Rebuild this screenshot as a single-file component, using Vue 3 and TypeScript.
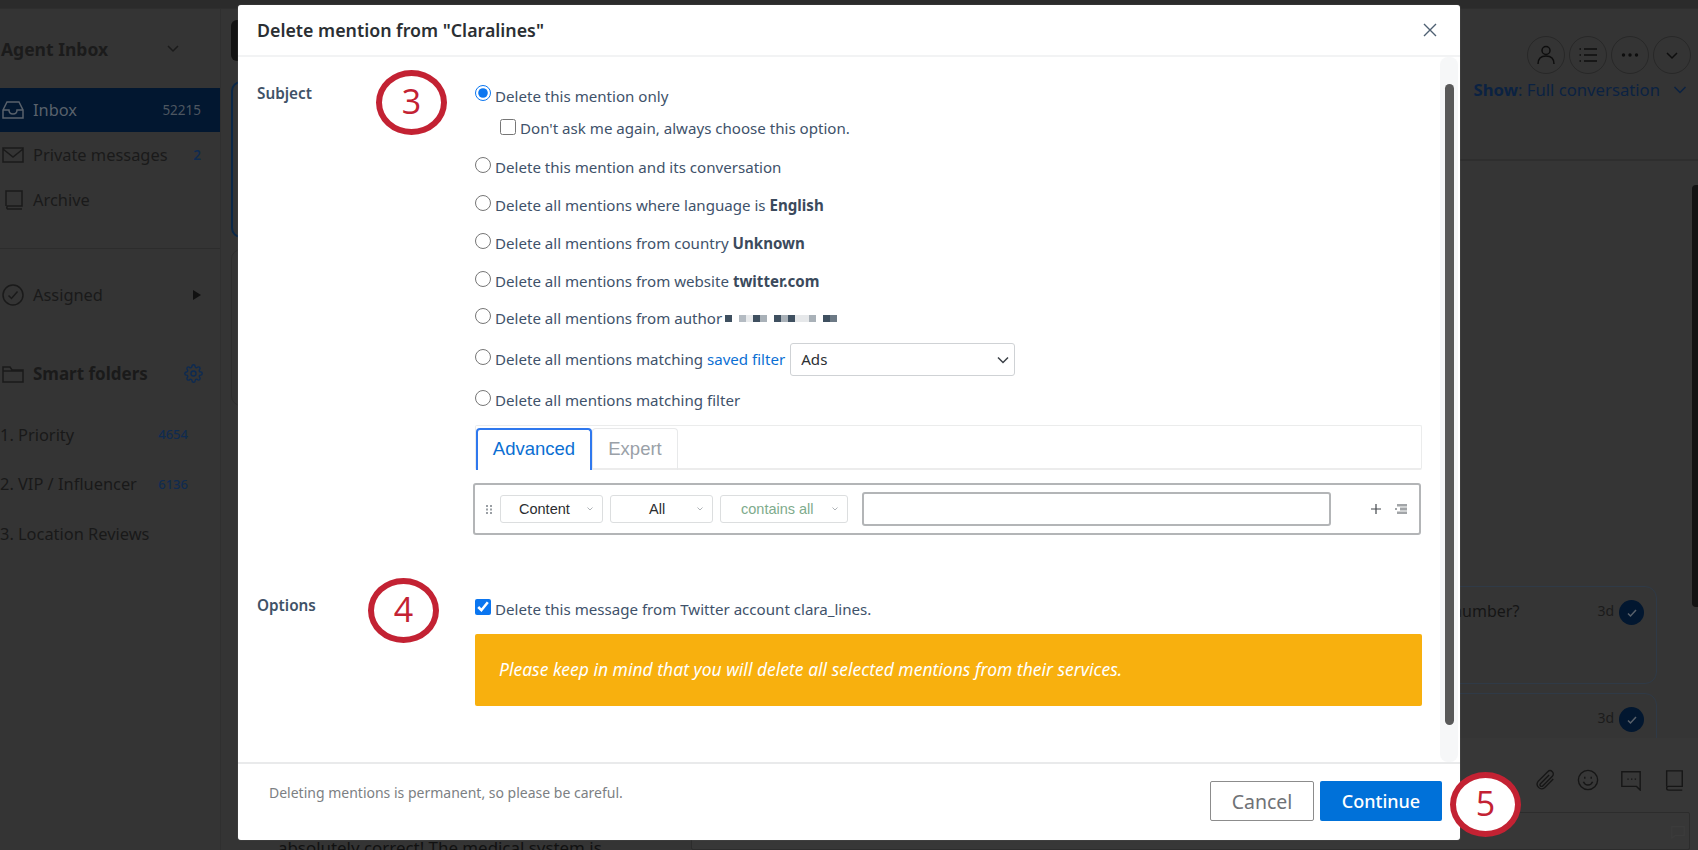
<script setup lang="ts">
interface Opt { text: string; bold?: string }
const simpleOpts: Opt[] = [
  { text: 'Delete this mention and its conversation' },
  { text: 'Delete all mentions where language is ', bold: 'English' },
  { text: 'Delete all mentions from country ', bold: 'Unknown' },
  { text: 'Delete all mentions from website ', bold: 'twitter.com' },
]
const pixels: string[] = ['#3f5060','#fff','#b4bbc2','#e8eaec','#3f5060','#a9b1b8','#fff','#3f5060','#a9b1b8','#3f5060','#e6e8ea','#e6e8ea','#a9b1b8','#fff','#3f5060','#6c7985']
const folders = [
  { name: '1. Priority', count: '4654' },
  { name: '2. VIP / Influencer', count: '6136' },
  { name: '3. Location Reviews', count: '' },
]
</script>

<template>
  <div class="page">
    <div class="topbar"></div>
    <div class="app">
      <aside class="sidebar">
        <div class="side-title">
          <span>Agent Inbox</span>
          <svg width="14" height="10" viewBox="0 0 14 10" class="side-chev"><path d="M2 2l5 5 5-5" /></svg>
        </div>
        <div class="nav nav-active">
          <svg class="nav-ico" width="24" height="24" viewBox="0 0 24 24"><path d="M2 12l4-8h12l4 8v8H2zM2 12h6c0 3 2 4 4 4s4-1 4-4h6" /></svg>
          <span class="nav-label">Inbox</span><span class="nav-count">52215</span>
        </div>
        <div class="nav">
          <svg class="nav-ico" width="24" height="24" viewBox="0 0 24 24"><path d="M2 5h20v14H2zM2 6l10 8 10-8" /></svg>
          <span class="nav-label">Private messages</span><span class="nav-count blue">2</span>
        </div>
        <div class="nav">
          <svg class="nav-ico" width="24" height="24" viewBox="0 0 24 24"><path d="M5 18V3h16v15H6.500a2 2 0 0 0 0 3H21" /></svg>
          <span class="nav-label archive">Archive</span>
        </div>
        <div class="side-rule"></div>
        <div class="nav assigned">
          <svg class="nav-ico" width="24" height="24" viewBox="0 0 24 24"><circle cx="12" cy="12" r="10" /><path d="M7.500 12.500l3 3 6-7" /></svg>
          <span class="nav-label archive">Assigned</span>
          <span class="tri"></span>
        </div>
        <div class="nav smart">
          <svg class="nav-ico" width="24" height="24" viewBox="0 0 24 24"><path d="M2 20V5h7l2 3h11v12zM2 9h20" /></svg>
          <span class="smart-label">Smart folders</span>
          <svg class="gear" width="19" height="19" viewBox="0 0 24 24"><circle cx="12" cy="12" r="3.200" /><path d="M19.400 15a1.650 1.650 0 0 0 .33 1.820l.06.06a2 2 0 0 1 0 2.830 2 2 0 0 1-2.830 0l-.06-.06a1.650 1.650 0 0 0-1.820-.33 1.650 1.650 0 0 0-1 1.510V21a2 2 0 0 1-2 2 2 2 0 0 1-2-2v-.09A1.650 1.650 0 0 0 9 19.400a1.650 1.650 0 0 0-1.820.33l-.06.06a2 2 0 0 1-2.830 0 2 2 0 0 1 0-2.830l.06-.06a1.650 1.650 0 0 0 .33-1.820 1.650 1.650 0 0 0-1.510-1H3a2 2 0 0 1-2-2 2 2 0 0 1 2-2h.09A1.650 1.650 0 0 0 4.600 9a1.650 1.650 0 0 0-.33-1.820l-.06-.06a2 2 0 0 1 0-2.830 2 2 0 0 1 2.830 0l.06.06a1.650 1.650 0 0 0 1.820.33H9a1.650 1.650 0 0 0 1-1.510V3a2 2 0 0 1 2-2 2 2 0 0 1 2 2v.09a1.650 1.650 0 0 0 1 1.510 1.650 1.650 0 0 0 1.820-.33l.06-.06a2 2 0 0 1 2.830 0 2 2 0 0 1 0 2.830l-.06.06a1.650 1.650 0 0 0-.33 1.820V9a1.650 1.650 0 0 0 1.510 1H21a2 2 0 0 1 2 2 2 2 0 0 1-2 2h-.09a1.650 1.650 0 0 0-1.510 1z" /></svg>
        </div>
        <div class="folder" v-for="f in folders" :key="f.name">
          <span class="folder-name">{{ f.name }}</span>
          <span class="folder-count">{{ f.count }}</span>
        </div>
      </aside>

      <section class="list">
        <div class="list-tab"></div>
        <div class="list-card selected"></div>
        <div class="list-card"></div>
        <p class="snippet">absolutely correct! The medical system is</p>
      </section>

      <section class="thread">
        <header class="thread-head">
          <div class="round-row">
            <span class="round"><svg width="22" height="22" viewBox="0 0 22 22"><circle cx="11" cy="6.500" r="4" /><path d="M3 20c0-5 3-8 8-8s8 3 8 8" /></svg></span>
            <span class="round"><svg width="20" height="20" viewBox="0 0 20 20"><path d="M6 4h13M6 10h13M6 16h13M1.500 4h1.500M1.500 10h1.500M1.500 16h1.500" /></svg></span>
            <span class="round"><svg width="20" height="20" viewBox="0 0 20 20"><circle cx="3.500" cy="10" r="1.700" class="fill" /><circle cx="10" cy="10" r="1.700" class="fill" /><circle cx="16.500" cy="10" r="1.700" class="fill" /></svg></span>
            <span class="round"><svg width="14" height="14" viewBox="0 0 14 14"><path d="M2 5l5 5 5-5" /></svg></span>
          </div>
          <div class="show">
            <span><b>Show</b>: Full conversation</span>
            <svg width="14" height="10" viewBox="0 0 14 10"><path d="M1.500 2l5.500 5.500L12.500 2" /></svg>
          </div>
        </header>
        <div class="messages">
          <div class="bubble first">
            <span class="bubble-text">Can you share your phone number?</span>
            <span class="age">3d</span>
            <span class="tick"><svg width="12" height="12" viewBox="0 0 12 12"><path d="M2 6.500l2.500 2.500L10 3" /></svg></span>
          </div>
          <div class="bubble second">
            <span class="bubble-text"></span>
            <span class="age">3d</span>
            <span class="tick"><svg width="12" height="12" viewBox="0 0 12 12"><path d="M2 6.500l2.500 2.500L10 3" /></svg></span>
          </div>
          <div class="thumb-dark"></div>
        </div>
        <div class="composer">
          <div class="tools">
            <svg width="22" height="22" viewBox="0 0 24 24"><path d="M21 11l-9.500 9.500a5 5 0 0 1-7-7L15 3a3.400 3.400 0 0 1 5 5L9.500 18.500A1.700 1.700 0 0 1 7 16l9.500-9.500" /></svg>
            <svg width="22" height="22" viewBox="0 0 24 24"><circle cx="12" cy="12" r="10.500" /><path d="M7 14c1 2.500 2.800 3.500 5 3.500s4-1 5-3.500M8.500 8.500v2M15.500 8.500v2" /></svg>
            <svg width="22" height="22" viewBox="0 0 24 24"><path d="M2 3h20v20l-4-4H2zM8 11h1.500M12 11h1.500M16 11h1.500" /></svg>
            <svg width="22" height="22" viewBox="0 0 24 24"><path d="M4 19V2h17v17H6a2 2 0 0 0 0 4h15" /></svg>
          </div>
          <div class="reply-box">
            <svg class="reply-ico" width="14" height="14" viewBox="0 0 16 16"><path d="M1 2h14v10H5l-4 3z" /></svg>
          </div>
        </div>
      </section>
    </div>

    <div class="modal">
      <header class="modal-head">
        <h2>Delete mention from "Claralines"</h2>
        <svg class="close" width="16" height="16" viewBox="0 0 16 16"><path d="M2 2l12 12M14 2L2 14" /></svg>
      </header>

      <div class="modal-body">
        <div class="modal-scroll">
          <div class="section subject">
            <div class="sec-label">Subject</div>
            <div class="sec-body">
              <label class="opt first-opt"><input type="radio" name="scope" checked /><span>Delete this mention only</span></label>
              <label class="sub-opt"><input type="checkbox" /><span>Don't ask me again, always choose this option.</span></label>
              <label class="opt" v-for="o in simpleOpts" :key="o.text">
                <input type="radio" name="scope" />
                <span>{{ o.text }}<b v-if="o.bold">{{ o.bold }}</b></span>
              </label>
              <label class="opt author">
                <input type="radio" name="scope" />
                <span>Delete all mentions from author</span>
                <span class="pixels"><i v-for="(p, i) in pixels" :key="i" :style="{ background: p }"></i></span>
              </label>
              <label class="opt saved">
                <input type="radio" name="scope" />
                <span>Delete all mentions matching <a class="link">saved filter</a></span>
                <span class="ads-wrap">
                  <select class="ads"><option>Ads</option></select>
                  <svg width="12" height="8" viewBox="0 0 12 8"><path d="M1 1.500l5 5 5-5" /></svg>
                </span>
              </label>
              <label class="opt filter-opt"><input type="radio" name="scope" /><span>Delete all mentions matching filter</span></label>

              <div class="tabs">
                <div class="tab active">Advanced</div>
                <div class="tab">Expert</div>
              </div>
              <div class="rule-row">
                <svg class="grip" width="6" height="9" viewBox="0 0 6 9"><path d="M0 0h2v2H0zM4 0h2v2H4zM0 3.500h2v2H0zM4 3.500h2v2H4zM0 7h2v2H0zM4 7h2v2H4z" /></svg>
                <div class="pick w-content"><span>Content</span><svg width="6" height="4" viewBox="0 0 6 4"><path d="M.5.500L3 3 5.500.500" /></svg></div>
                <div class="pick w-all"><span>All</span><svg width="6" height="4" viewBox="0 0 6 4"><path d="M.5.500L3 3 5.500.500" /></svg></div>
                <div class="pick w-contains"><span class="green">contains all</span><svg width="6" height="4" viewBox="0 0 6 4"><path d="M.5.500L3 3 5.500.500" /></svg></div>
                <input class="rule-input" type="text" />
                <svg class="plus" width="12" height="12" viewBox="0 0 12 12"><path d="M6 1v10M1 6h10" /></svg>
                <svg class="indent" width="12" height="12" viewBox="0 0 12 12"><path d="M2 1h10v2.500H2zM5 4.500h7v3H5zM2 8.500h10V11H2zM0 5h2v2H0z" /></svg>
              </div>
            </div>
          </div>

          <div class="section options">
            <div class="sec-label">Options</div>
            <div class="sec-body">
              <label class="opt del-msg"><input type="checkbox" checked /><span>Delete this message from Twitter account clara_lines.</span></label>
              <div class="warning">Please keep in mind that you will delete all selected mentions from their services.</div>
            </div>
          </div>
        </div>
        <div class="track"><div class="track-thumb"></div></div>
      </div>

      <footer class="modal-foot">
        <span class="foot-note">Deleting mentions is permanent, so please be careful.</span>
        <div class="foot-btns">
          <button class="btn cancel" type="button">Cancel</button>
          <button class="btn go" type="button">Continue</button>
        </div>
      </footer>
    </div>

    <div class="callout c3">3</div>
    <div class="callout c4">4</div>
    <div class="callout c5">5</div>
  </div>
</template>

<style>
html, body { margin: 0; background: #343434; }
</style>

<style scoped>
.page {
  position: relative;
  width: 1698px;
  height: 850px;
  overflow: hidden;
  background: #343434;
  font-family: "Noto Sans", "Open Sans", sans-serif;
  display: flex;
  flex-direction: column;
  color: #1d1d1d;
}
svg { fill: none; stroke: currentColor; stroke-width: 1.5; }
.topbar { height: 8px; flex: none; background: #2b2b2b; border-bottom: 1px solid #2e2e2e; }
.app { flex: 1; display: flex; min-height: 0; }

.sidebar { width: 220px; flex: none; border-right: 1px solid #2f2f2f; box-sizing: content-box; }
.side-title { height: 79px; display: flex; align-items: center; justify-content: space-between; font-size: 17.500px; font-weight: 700; color: #1b1b1b; padding: 0 0 0 1px; box-sizing: border-box; }
.side-chev { margin-right: 40px; }
.nav { height: 45px; display: flex; align-items: center; font-size: 16.400px; padding-right: 19px; color: #1a1a1a; }
.nav-active { background: #021730; color: #59616b; height: 44px; margin-bottom: 0; }
.nav-ico { margin-left: 1px; flex: none; }
.nav-label { margin-left: 8px; flex: 1; padding-bottom: 1px; }
.nav-count { font-size: 13.500px; color: #4d5660; }
.nav-count.blue { color: #0f2b50; font-weight: 600; }
.side-rule { height: 1px; background: #2c2c2c; margin-top: 26px; }
.assigned { margin-top: 23px; }
.tri { width: 0; height: 0; border-left: 8px solid #111; border-top: 5px solid transparent; border-bottom: 5px solid transparent; }
.smart { margin-top: 34px; padding-right: 17px; }
.smart-label { margin-left: 8px; flex: 1; font-weight: 700; font-size: 17px; padding-bottom: 1px; }
.gear { color: #0c2a52; stroke-width: 1.700; flex: none; }
.folder { height: 49.500px; display: flex; align-items: center; justify-content: space-between; font-size: 16.400px; width: 188px; color: #191919; padding-bottom: 1px; box-sizing: border-box; }
.smart + .folder { margin-top: 14px; }
.folder-count { font-size: 13px; color: #0f2b50; font-weight: 500; }

.list { width: 470px; flex: none; display: flex; flex-direction: column; padding-left: 10px; box-sizing: border-box; overflow: hidden; }
.list-tab { height: 41px; margin-top: 11px; background: #131313; border-radius: 6px; flex: none; }
.list-card { height: 157px; margin-top: 20px; border: 2px solid #0a2747; border-radius: 10px; flex: none; box-sizing: border-box; }
.list-card:not(.selected) { margin-top: 11px; border: 1px solid #2e2e2e; }
.snippet { margin: auto 0 -9px 47px; font-size: 16.900px; line-height: 22px; color: #111; white-space: nowrap; }

.thread { flex: 1; min-width: 0; display: flex; flex-direction: column; }
.thread-head { height: 152px; flex: none; border-bottom: 2px solid #2e2e2e; box-sizing: border-box; display: flex; flex-direction: column; align-items: flex-end; padding: 27px 7px 0 0; }
.round-row { display: flex; gap: 4px; }
.round { width: 38px; height: 38px; border-radius: 50%; border: 1px solid #282828; box-sizing: border-box; display: flex; align-items: center; justify-content: center; color: #0e0e0e; }
.fill { fill: currentColor; stroke: none; }
.show { margin-top: 4px; font-size: 16.700px; color: #0b2242; display: flex; align-items: center; white-space: nowrap; margin-right: 4px; }
.show b { font-weight: 700; }
.show svg { margin-left: 13px; }
.messages { flex: 1; position: relative; min-height: 0; overflow: hidden; padding-top: 425px; padding-right: 41px; background: #353535; }
.bubble { height: 98px; border: 1px solid #2f3a47; border-radius: 12px; display: flex; align-items: flex-start; box-sizing: border-box; padding: 13px 12px 0 0; margin-left: 300px; }
.bubble.second { margin-top: 9px; }
.bubble-text { flex: 1; text-align: right; font-size: 16px; color: #151515; padding-right: 78px; white-space: nowrap; }
.age { font-size: 14px; color: #1b1b1b; margin: 0 5px 0 0; line-height: 22px; }
.tick { width: 25px; height: 25px; border-radius: 50%; background: #021730; color: #59616b; display: flex; align-items: center; justify-content: center; }
.thumb-dark { position: absolute; right: 0; top: 24px; width: 6px; height: 422px; border-radius: 4px 0 0 4px; background: #131313; }
.composer { height: 112px; flex: none; background: #373737; display: flex; flex-direction: column; }
.tools { display: flex; justify-content: flex-end; gap: 21px; margin: 31px 13px 0 0; color: #161616; }
.reply-box { margin: 21px 8px 0 0; height: 60px; border: 1px solid #2c2c2c; border-radius: 2px; box-sizing: border-box; display: flex; justify-content: flex-end; padding: 12px 4px 0 0; }
.reply-ico { color: #3b3b3b; }

.modal { position: absolute; left: 238px; top: 5px; width: 1222px; height: 835px; background: #fff; border-radius: 3px; display: flex; flex-direction: column; color: #40526a; box-shadow: 0 0 1px #8d8d8d; }
.modal-head { height: 50px; flex: none; border-bottom: 2px solid #f2f3f4; display: flex; align-items: center; justify-content: space-between; padding: 0 22px 0 19px; box-sizing: content-box; }
.modal-head h2 { margin: 0; font-size: 17.800px; font-weight: 600; color: #2b2f33; }
.close { color: #4e6072; stroke-width: 1.400; }
.modal-body { flex: 1; min-height: 0; display: flex; }
.modal-scroll { flex: 1; min-width: 0; padding-top: 22px; }
.section { display: flex; }
.sec-label { width: 237px; flex: none; padding-left: 19px; box-sizing: border-box; font-size: 15.300px; font-weight: 600; color: #3f5267; line-height: 20px; }
.subject .sec-label { margin-top: 4px; }
.sec-body { width: 947px; flex: none; display: flex; flex-direction: column; }
.opt { height: 38px; display: flex; align-items: center; font-size: 15.100px; color: #40526a; white-space: nowrap; }
.opt > input[type="radio"] { width: 16px; height: 16px; margin: -5px 4px 0 0; flex: none; accent-color: #0b76f0; }
.opt b { font-weight: 700; color: #3b4a5c; }
.first-opt { height: 33px; }
.sub-opt { height: 32px; display: flex; align-items: center; font-size: 15.100px; color: #40526a; padding-left: 25px; margin-bottom: 4px; }
.sub-opt input { width: 16px; height: 16px; margin: -3px 4px 0 0; accent-color: #0b76f0; }
.author { margin-top: -1px; }
.pixels { display: inline-flex; margin-left: 3px; height: 7px; }
.pixels i { width: 7px; height: 7px; display: block; }
.saved { margin-top: 3px; }
.filter-opt { margin-top: 3px; }
.link { color: #0b6fd3; }
.ads-wrap { position: relative; margin-left: 5px; display: inline-flex; align-items: center; }
.ads-wrap svg { position: absolute; right: 6px; top: 13px; color: #3b4047; pointer-events: none; }
.ads { appearance: none; width: 225px; height: 33px; border: 1px solid #cfd2d5; border-radius: 3px; background: #fff; padding: 0 10px; font: 15.100px "Noto Sans", sans-serif; color: #2c2f33; }
.tabs { height: 45px; margin-top: 6px; display: flex; align-items: flex-end; border: 1px solid #ebecec; border-bottom: 2px solid #ececec; border-radius: 2px; box-sizing: border-box; flex: none; }
.tab { height: 42px; margin-bottom: -2px; display: flex; align-items: center; justify-content: center; font-family: "Liberation Sans", sans-serif; font-size: 18.500px; color: #9aa1a8; width: 86px; border: 1px solid #e8e9ea; border-bottom: none; border-radius: 4px 4px 0 0; box-sizing: border-box; padding-bottom: 2px; }
.tab.active { width: 116px; color: #0b6fd3; border: 2px solid #2f78ee; border-bottom: none; background: #fff; margin-left: 0; }
.rule-row { height: 52px; margin: 13px 1px 0 -2px; border: 2px solid #b3b5b7; border-radius: 3px; box-sizing: border-box; display: flex; align-items: center; font-family: "Liberation Sans", sans-serif; flex: none; }
.grip { margin-left: 11px; stroke: none; fill: #9a9fa4; flex: none; }
.pick { height: 28px; border: 1.500px solid #dcdedf; border-radius: 3px; box-sizing: border-box; display: flex; align-items: center; justify-content: space-between; font-size: 14.500px; color: #2b2d30; flex: none; margin-right: 7px; padding: 0 9px 0 18px; }
.pick svg { stroke-width: .8; color: #9a9fa4; }
.w-content { width: 103px; margin-left: 8px; }
.w-all { width: 103px; padding-left: 38px; }
.w-contains { width: 128px; margin-right: 14px; padding-left: 20px; }
.green { color: #7eab8c; }
.rule-input { width: 469px; height: 34px; border: 2px solid #b3b5b7; border-radius: 3px; box-sizing: border-box; background: #fff; flex: none; }
.plus { margin-left: 39px; color: #44484d; stroke-width: 1.200; flex: none; }
.indent { margin-left: 13px; stroke: none; fill: #a2a5a8; flex: none; }
.options { margin-top: 61px; }
.options .sec-label { margin-top: -1px; }
.del-msg { height: 32px; margin-top: -3px; }
.del-msg input { width: 16px; height: 16px; margin: -4px 4px 0 0; accent-color: #0b76f0; }
.warning { margin-top: 9px; height: 72px; background: #f8b00e; border-radius: 2px; color: #fff; font-style: italic; font-size: 17.500px; font-weight: 400; display: flex; align-items: center; padding: 0 0 2px 24px; box-sizing: border-box; }
.track { width: 18px; flex: none; margin-right: 2px; background: #f6f7f8; border-radius: 8px; padding-top: 27px; box-sizing: border-box; display: flex; justify-content: center; }
.track-thumb { width: 9px; height: 641px; background: #595959; border-radius: 5px; }
.modal-foot { height: 78px; flex: none; border-top: 2px solid #e9eaeb; display: flex; align-items: center; justify-content: space-between; padding: 0 18px 0 31px; box-sizing: border-box; }
.foot-note { font-size: 14px; color: #7c7f83; margin-top: -20px; }
.foot-btns { display: flex; gap: 6px; align-items: center; margin-top: -2px; }
.btn { height: 40px; font: 18px "Noto Sans", sans-serif; border-radius: 2px; box-sizing: border-box; padding: 0; }
.cancel { width: 104px; background: #fff; border: 1.500px solid #8c8c8c; color: #6f7276; font-size: 19.500px; }
.go { width: 122px; background: #0071d9; border: none; color: #fff; font-weight: 500; }

.callout { position: absolute; width: 71px; height: 65px; border: 6px solid #c32233; border-radius: 50%; box-sizing: border-box; display: flex; align-items: center; justify-content: center; color: #c32233; font-family: "Open Sans", sans-serif; font-size: 34px; line-height: 1; background: #fff; padding-bottom: 3px; }
.c3 { left: 376px; top: 70px; }
.c4 { left: 368px; top: 578px; }
.c5 { left: 1450px; top: 772px; }
</style>
